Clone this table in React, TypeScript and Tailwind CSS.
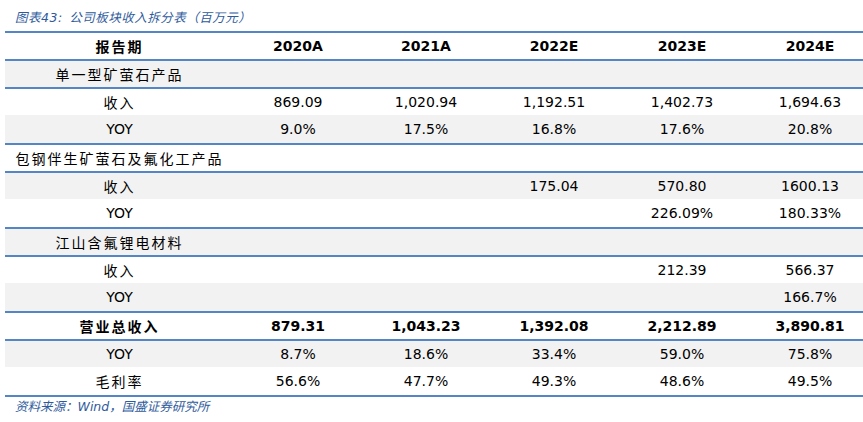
import React from 'react';

type Row = {
  label: string;
  values: string[];
  kind: 'section' | 'sub' | 'total';
  gray: boolean;
  topLine: boolean;
};

const rows: Row[] = [
  { label: '单一型矿萤石产品', values: ['', '', '', '', ''], kind: 'section', gray: true, topLine: true },
  { label: '收入', values: ['869.09', '1,020.94', '1,192.51', '1,402.73', '1,694.63'], kind: 'sub', gray: false, topLine: true },
  { label: 'YOY', values: ['9.0%', '17.5%', '16.8%', '17.6%', '20.8%'], kind: 'sub', gray: true, topLine: false },
  { label: '包钢伴生矿萤石及氟化工产品', values: ['', '', '', '', ''], kind: 'section', gray: false, topLine: true },
  { label: '收入', values: ['', '', '175.04', '570.80', '1600.13'], kind: 'sub', gray: true, topLine: true },
  { label: 'YOY', values: ['', '', '', '226.09%', '180.33%'], kind: 'sub', gray: false, topLine: false },
  { label: '江山含氟锂电材料', values: ['', '', '', '', ''], kind: 'section', gray: true, topLine: true },
  { label: '收入', values: ['', '', '', '212.39', '566.37'], kind: 'sub', gray: false, topLine: true },
  { label: 'YOY', values: ['', '', '', '', '166.7%'], kind: 'sub', gray: true, topLine: false },
  { label: '营业总收入', values: ['879.31', '1,043.23', '1,392.08', '2,212.89', '3,890.81'], kind: 'total', gray: false, topLine: true },
  { label: 'YOY', values: ['8.7%', '18.6%', '33.4%', '59.0%', '75.8%'], kind: 'sub', gray: true, topLine: true },
  { label: '毛利率', values: ['56.6%', '47.7%', '49.3%', '48.6%', '49.5%'], kind: 'sub', gray: false, topLine: false },
];

const years = ['2020A', '2021A', '2022E', '2023E', '2024E'];

const cjk = "font-['Noto_Sans_CJK_SC',sans-serif]";
const num = "font-['DejaVu_Sans','Noto_Sans_CJK_SC',sans-serif]";

function Label({ text, bold }: { text: string; bold?: boolean }) {
  // latin labels (YOY) use the number font, chinese ones get wider spacing
  const isLatin = /^[A-Za-z]+$/.test(text);
  if (isLatin) {
    return <span className={`${num} text-[14px] text-black`}>{text}</span>;
  }
  return (
    <span
      className={`${cjk} text-[14px] tracking-[2px] text-black ${bold ? 'font-bold' : 'font-normal'}`}
    >
      {text}
    </span>
  );
}

export default function App() {
  return (
    <div className="w-[863px] h-[422px] overflow-hidden bg-white">
      <div
        className={`h-[31px] pl-[15px] pt-[9px] text-[12.5px] italic leading-[16px] tracking-[0.5px] text-[#2f5b9c] ${cjk}`}
      >
        图表<span className="font-['DejaVu_Sans',sans-serif]">43:</span>&nbsp; 公司板块收入拆分表（百万元）
      </div>

      <div className="ml-[5px] w-[869px]">
        {/* header */}
        <div className="grid h-[28px] grid-cols-[229px_repeat(5,128px)] items-center border-t-2 border-[#5485c4] bg-white">
          <div className="flex justify-center">
            <Label text="报告期" bold />
          </div>
          {years.map((y) => (
            <div key={y} className={`text-center text-[14px] font-bold text-black ${num}`}>
              {y}
            </div>
          ))}
        </div>

        {rows.map((r, i) => (
          <div
            key={i}
            className={`grid h-[28px] grid-cols-[229px_repeat(5,128px)] items-center ${
              r.topLine ? 'border-t-2 border-[#5485c4]' : ''
            } ${i === rows.length - 1 ? 'h-[30px] border-b-2 border-[#5485c4]' : ''} ${
              r.gray ? 'bg-[#f2f2f2]' : 'bg-white'
            }`}
          >
            <div className="flex justify-center">
              <Label text={r.label} bold={r.kind === 'total'} />
            </div>
            {r.values.map((v, j) => (
              <div
                key={j}
                className={`text-center text-[14px] text-black ${num} ${
                  r.kind === 'total' ? 'font-bold' : 'font-normal'
                }`}
              >
                {v}
              </div>
            ))}
          </div>
        ))}
      </div>

      <div className={`pl-[15px] pt-[1px] text-[12.5px] italic leading-[16px] text-[#2f5b9c] ${cjk}`}>
        资料来源：<span className="font-['DejaVu_Sans',sans-serif]">Wind</span>，国盛证券研究所
      </div>
    </div>
  );
}
